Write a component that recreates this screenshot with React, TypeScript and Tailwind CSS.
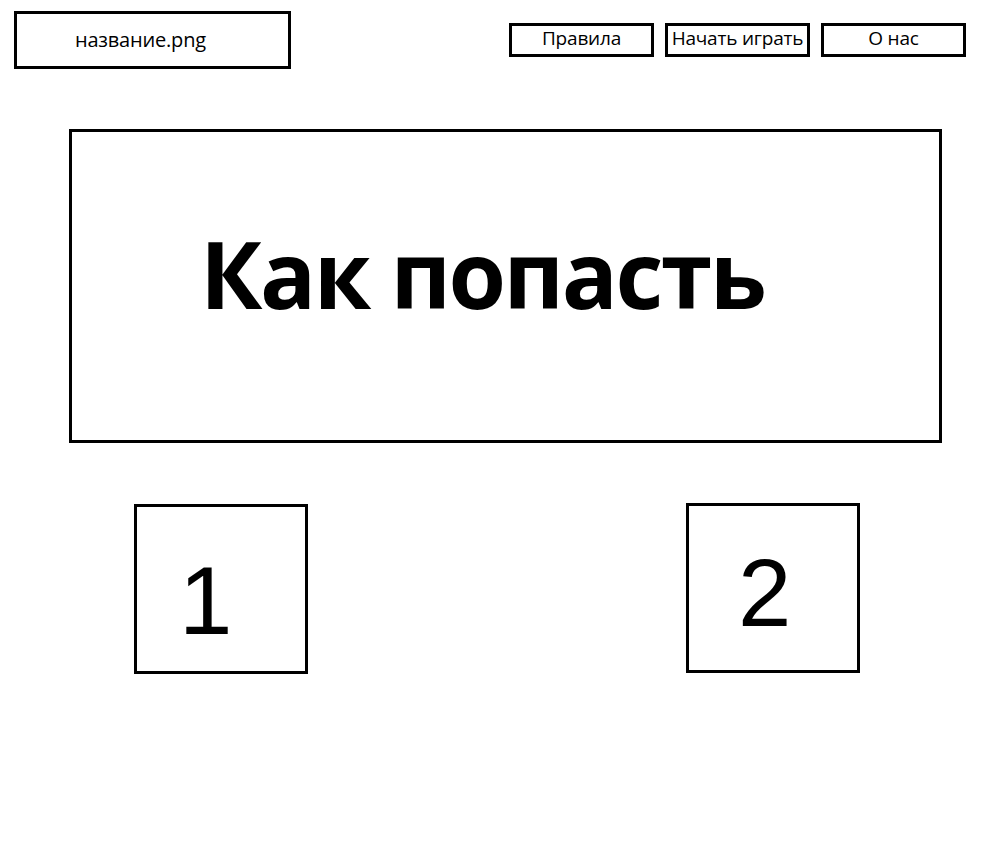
export default function App() {
  const navItems = ['Правила', 'Начать играть', 'О нас']

  return (
    <div className="min-h-[862px] w-[1008px] bg-white text-black" style={{ fontFamily: '"Open Sans", "Noto Sans", sans-serif' }}>
      {/* Header */}
      <header className="flex items-start justify-between pl-[14px] pr-[42px] pt-[11px]">
        <div className="flex h-[58px] w-[277px] items-center border-[3px] border-black pl-[58px] text-[20px] tracking-[-0.2px]">
          название.png
        </div>
        <nav className="mt-[12px] flex gap-[11px]">
          {navItems.map((item) => (
            <div
              key={item}
              className="flex h-[34px] w-[145px] items-center justify-center border-[3px] border-black pb-[3px] text-[19px] leading-none tracking-[-0.2px]"
            >
              {item}
            </div>
          ))}
        </nav>
      </header>

      {/* Hero box */}
      <section className="ml-[69px] mt-[60px] flex h-[314px] w-[873px] items-center border-[3px] border-black pl-[128px]">
        <h1 className="-mt-[26px] text-[93px] font-bold leading-none tracking-[-2.5px]">Как попасть</h1>
      </section>

      {/* Steps */}
      <div className="mt-[61px] flex items-start">
        <div
          className="ml-[134px] flex h-[170px] w-[174px] items-center border-[3px] border-black pl-[42px] text-[96px] leading-none"
          style={{ fontFamily: '"Liberation Sans", Arial, sans-serif' }}
        >
          <span className="mt-[24px]">1</span>
        </div>
        <div
          className="ml-[378px] -mt-[1px] flex h-[170px] w-[174px] items-center border-[3px] border-black pl-[49px] text-[96px] leading-none"
          style={{ fontFamily: '"Liberation Sans", Arial, sans-serif' }}
        >
          <span className="mt-[10px]">2</span>
        </div>
      </div>
    </div>
  )
}
